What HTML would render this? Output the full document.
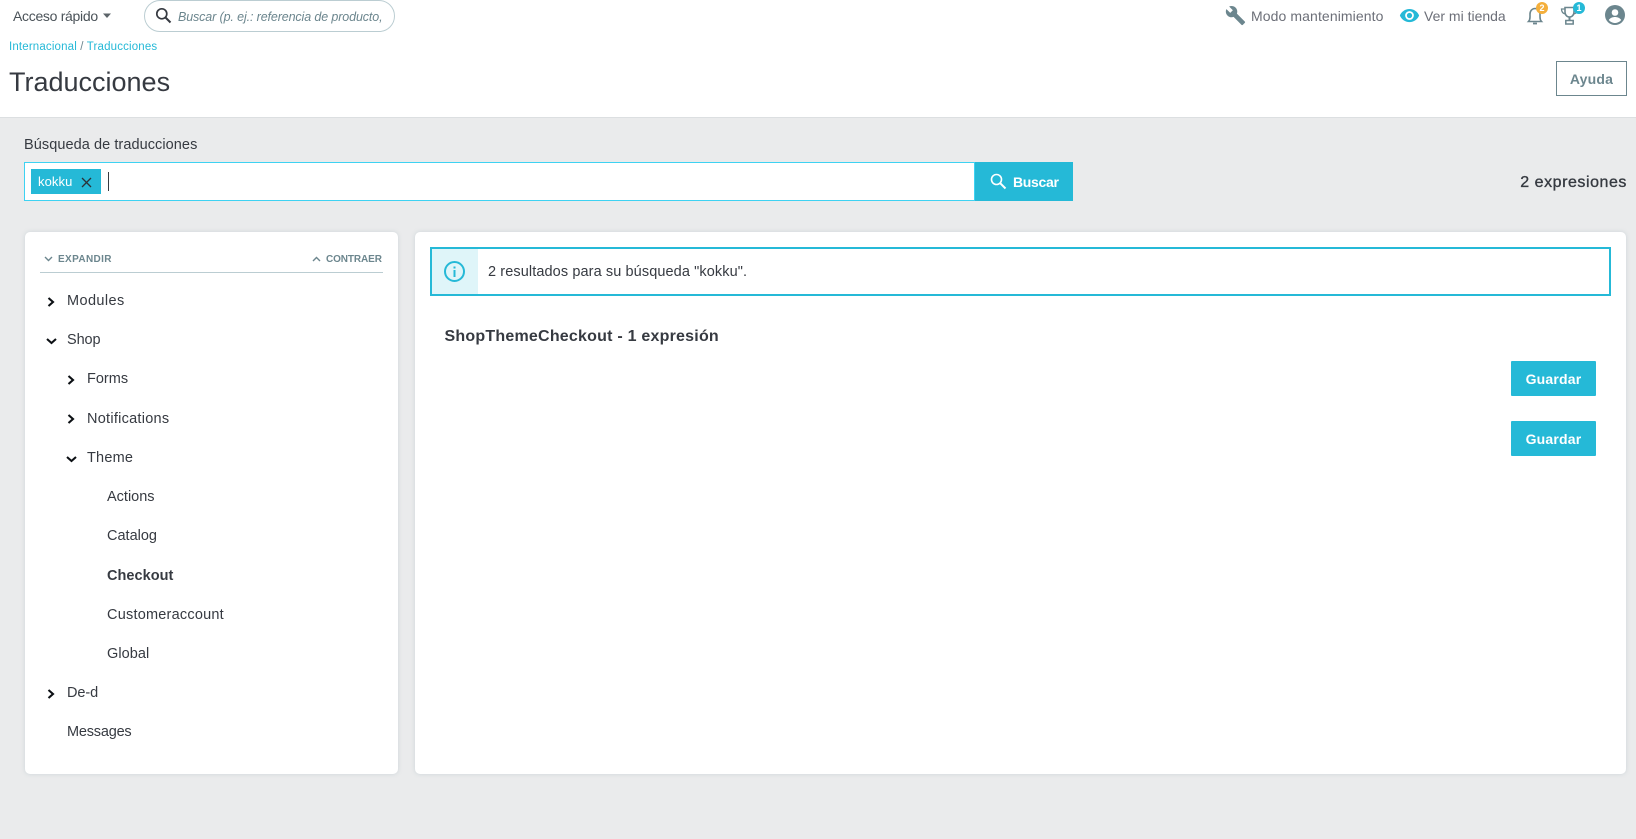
<!DOCTYPE html>
<html lang="es">
<head>
<meta charset="utf-8">
<title>Traducciones</title>
<style>
html,body{margin:0;padding:0}
body{width:1636px;height:839px;position:relative;overflow:hidden;background:#eaebec;font-family:"Liberation Sans",sans-serif;font-size:14.5px;color:#363a41}
.t{position:absolute;white-space:nowrap;line-height:20px;height:20px}
.a{position:absolute}
svg{position:absolute;display:block}
#hdr{position:absolute;left:0;top:0;width:1636px;height:117px;background:#fff;border-bottom:1px solid #dcdfe1}
.card{position:absolute;top:232px;height:542px;background:#fff;border-radius:5px;box-shadow:0 0 4px rgba(150,170,180,.35)}
.btn{position:absolute;background:#25b9d7;color:#fff;font-weight:700;text-align:center;border-radius:1px}
</style>
</head>
<body>
<div id="hdr"></div>

<div class="t" style="left:13px;top:6px;font-size:14px;letter-spacing:-.3px;color:#4a5258">Acceso rápido</div>
<svg style="left:102px;top:13px" width="10" height="6"><path d="M1 .5h8L5 5z" fill="#5c6469"/></svg>

<div class="a" style="left:144px;top:0;width:249px;height:30px;border:1px solid #bbcdd2;border-radius:16px;overflow:hidden">
  <div class="t" style="left:33px;top:6px;width:208px;overflow:hidden;font-style:italic;font-size:12.5px;letter-spacing:-.12px;color:#6c868e">Buscar (p. ej.: referencia de producto, nombre de cliente...)</div>
</div>
<svg style="left:155px;top:7px" width="17" height="17" viewBox="0 0 17 17"><circle cx="6.800" cy="6.800" r="5" fill="none" stroke="#363a41" stroke-width="1.700"/><path d="M10.500 10.500l5 5" stroke="#363a41" stroke-width="2"/></svg>

<div class="t" style="left:9px;top:37px;font-size:11.5px;letter-spacing:.16px;color:#25b9d7">Internacional <span style="color:#6c868e">/</span> Traducciones</div>
<div class="t" style="left:9px;top:66px;height:32px;line-height:32px;font-size:27px;color:#363a41">Traducciones</div>

<!-- right header -->
<svg style="left:1225px;top:5px" width="21" height="21" viewBox="0 0 24 24"><path d="M22.700 19l-9.100-9.100c.9-2.300.4-5-1.500-6.900-2-2-5-2.400-7.400-1.300L9 6 6 9 1.600 4.700C.4 7.100.9 10.100 2.900 12.100c1.900 1.900 4.600 2.400 6.900 1.500l9.100 9.100c.4.400 1 .4 1.400 0l2.300-2.300c.5-.4.5-1.100.1-1.400z" fill="#6c868e"/></svg>
<div class="t" style="left:1251px;top:6px;font-size:14px;letter-spacing:.1px;color:#6c6f78">Modo mantenimiento</div>
<svg style="left:1399px;top:5px" width="21" height="21" viewBox="0 0 24 24"><path d="M12 4.500C7 4.500 2.700 7.600 1 12c1.700 4.400 6 7.500 11 7.500s9.300-3.100 11-7.500c-1.700-4.400-6-7.500-11-7.500zM12 17a5 5 0 1 1 0-10 5 5 0 0 1 0 10zm0-8a3 3 0 1 0 0 6 3 3 0 0 0 0-6z" fill="#25b9d7"/></svg>
<div class="t" style="left:1424px;top:6px;font-size:14px;color:#6c6f78">Ver mi tienda</div>

<svg style="left:1525px;top:4px" width="20" height="22" viewBox="0 0 20 22"><path d="M3.500 17.500c1.200-1.300 1.500-2.300 1.500-4.500V10c0-3 2-5.500 5-5.500s5 2.500 5 5.500v3c0 2.200.3 3.200 1.500 4.500z" fill="none" stroke="#6c868e" stroke-width="1.600"/><path d="M8 19.500h4" stroke="#6c868e" stroke-width="1.800"/></svg>
<div class="a" style="left:1536px;top:2px;width:12px;height:12px;border-radius:50%;background:#f4af3c;color:#fff;font-size:9px;font-weight:700;line-height:12px;text-align:center">2</div>

<svg style="left:1560px;top:5px" width="19" height="20" viewBox="0 0 19 20"><path d="M5 2.500h9v4.500c0 3-2 5-4.500 5S5 10 5 7z" fill="none" stroke="#6c868e" stroke-width="1.600"/><path d="M5 4H1.500c0 3 1.300 4.500 4 5M14 4h3.500c0 3-1.300 4.500-4 5" fill="none" stroke="#6c868e" stroke-width="1.300"/><path d="M9.500 12v3" stroke="#6c868e" stroke-width="2"/><rect x="5.800" y="15.500" width="7.400" height="3.500" fill="none" stroke="#6c868e" stroke-width="1.500"/></svg>
<div class="a" style="left:1573px;top:2px;width:12px;height:12px;border-radius:50%;background:#25b9d7;color:#fff;font-size:9px;font-weight:700;line-height:12px;text-align:center">1</div>

<svg style="left:1605px;top:5px" width="20" height="20" viewBox="0 0 20 20"><circle cx="10" cy="10" r="10" fill="#6c868e"/><circle cx="10" cy="7.500" r="3.300" fill="#fff"/><path d="M3.800 15c1.300-2 3.700-3 6.200-3s4.900 1 6.200 3c-1.500 1.800-3.700 3-6.200 3s-4.700-1.200-6.200-3z" fill="#fff"/></svg>

<div class="a" style="left:1556px;top:61px;width:69px;height:33px;border:1px solid #6c868e;background:#fff;color:#6c868e;font-weight:700;font-size:14px;line-height:35px;text-align:center;letter-spacing:.2px">Ayuda</div>

<!-- search -->
<div class="t" style="left:24px;top:135px;letter-spacing:.07px;color:#363a41">Búsqueda de traducciones</div>
<div class="a" style="left:24px;top:162px;width:949px;height:37px;border:1px solid #3ed2f2;background:#fff"></div>
<div class="a" style="left:31px;top:169px;width:70px;height:25px;background:#25b9d7"></div>
<div class="t" style="left:38px;top:172px;font-size:13px;letter-spacing:.1px;color:#fff">kokku</div>
<svg style="left:81px;top:177px" width="11" height="11" viewBox="0 0 11 11"><path d="M1 1l9 9M10 1l-9 9" stroke="#2b3238" stroke-width="1.300"/></svg>
<div class="a" style="left:108px;top:172px;width:1px;height:19px;background:#363a41"></div>
<div class="btn" style="left:975px;top:162px;width:98px;height:39px;border-radius:0"></div>
<svg style="left:990px;top:173px" width="17" height="17" viewBox="0 0 17 17"><circle cx="6.500" cy="6.500" r="5" fill="none" stroke="#fff" stroke-width="1.600"/><path d="M10.200 10.200l5.300 5.300" stroke="#fff" stroke-width="2"/></svg>
<div class="t" style="left:1013px;top:172px;font-weight:700;font-size:14px;letter-spacing:-.3px;color:#fff">Buscar</div>
<div class="t" style="right:9px;top:173px;font-size:16px;letter-spacing:.55px;color:#363a41;-webkit-text-stroke:.35px #363a41">2 expresiones</div>

<!-- left card -->
<div class="card" style="left:25px;width:373px"></div>
<svg style="left:44px;top:256px" width="9" height="6" viewBox="0 0 9 6"><path d="M1 1l3.500 3.500L8 1" fill="none" stroke="#6c868e" stroke-width="1.400"/></svg>
<div class="t" style="left:58px;top:250px;font-size:10px;font-weight:700;letter-spacing:.37px;color:#6c868e">EXPANDIR</div>
<svg style="left:312px;top:256px" width="9" height="6" viewBox="0 0 9 6"><path d="M1 5l3.500-3.500L8 5" fill="none" stroke="#6c868e" stroke-width="1.400"/></svg>
<div class="t" style="left:326px;top:250px;font-size:10px;font-weight:700;letter-spacing:-.1px;color:#6c868e">CONTRAER</div>
<div class="a" style="left:40px;top:272px;width:343px;height:1px;background:#bbcdd2"></div>

<svg style="left:47px;top:297px" width="9" height="10" viewBox="0 0 9 10"><path d="M1.500 1l4.500 4-4.500 4" fill="none" stroke="#0c1014" stroke-width="2.100"/></svg>
<div class="t" style="left:67px;top:291px;letter-spacing:.4px">Modules</div>
<svg style="left:46px;top:338px" width="11" height="7" viewBox="0 0 11 7"><path d="M1 1l4.500 4L10 1" fill="none" stroke="#0c1014" stroke-width="2.100"/></svg>
<div class="t" style="left:67px;top:330px;letter-spacing:-.1px">Shop</div>
<svg style="left:67px;top:375px" width="9" height="10" viewBox="0 0 9 10"><path d="M1.500 1l4.500 4-4.500 4" fill="none" stroke="#0c1014" stroke-width="2.100"/></svg>
<div class="t" style="left:87px;top:369px">Forms</div>
<svg style="left:67px;top:414px" width="9" height="10" viewBox="0 0 9 10"><path d="M1.500 1l4.500 4-4.500 4" fill="none" stroke="#0c1014" stroke-width="2.100"/></svg>
<div class="t" style="left:87px;top:409px;letter-spacing:.26px">Notifications</div>
<svg style="left:66px;top:456px" width="11" height="7" viewBox="0 0 11 7"><path d="M1 1l4.500 4L10 1" fill="none" stroke="#0c1014" stroke-width="2.100"/></svg>
<div class="t" style="left:87px;top:448px;letter-spacing:.2px">Theme</div>
<div class="t" style="left:107px;top:487px">Actions</div>
<div class="t" style="left:107px;top:526px">Catalog</div>
<div class="t" style="left:107px;top:566px;font-weight:700;letter-spacing:.04px">Checkout</div>
<div class="t" style="left:107px;top:605px;letter-spacing:.22px">Customeraccount</div>
<div class="t" style="left:107px;top:644px;letter-spacing:.07px">Global</div>
<svg style="left:47px;top:689px" width="9" height="10" viewBox="0 0 9 10"><path d="M1.500 1l4.500 4-4.500 4" fill="none" stroke="#0c1014" stroke-width="2.100"/></svg>
<div class="t" style="left:67px;top:683px;letter-spacing:-.1px">De-d</div>
<div class="t" style="left:67px;top:722px;letter-spacing:-.2px">Messages</div>

<!-- right card -->
<div class="card" style="left:415px;width:1211px"></div>
<div class="a" style="left:430px;top:247px;width:1177px;height:45px;border:2px solid #25b9d7;background:#fff"></div>
<div class="a" style="left:432px;top:249px;width:46px;height:45px;background:#dff5f9"></div>
<svg style="left:443px;top:260px" width="23" height="23" viewBox="0 0 23 23"><circle cx="11.500" cy="11.500" r="9.500" fill="none" stroke="#25b9d7" stroke-width="2"/><rect x="10.500" y="10" width="2" height="7" fill="#25b9d7"/><rect x="10.500" y="6.500" width="2" height="2" fill="#25b9d7"/></svg>
<div class="t" style="left:488px;top:262px;letter-spacing:.1px;color:#363a41">2 resultados para su búsqueda "kokku".</div>
<div class="t" style="left:444.500px;top:327px;font-size:16px;font-weight:700;letter-spacing:.22px;color:#363a41">ShopThemeCheckout - 1 expresión</div>
<div class="btn" style="left:1511px;top:361px;width:85px;height:35px;line-height:37px;font-size:14px;letter-spacing:.2px">Guardar</div>
<div class="btn" style="left:1511px;top:421px;width:85px;height:35px;line-height:37px;font-size:14px;letter-spacing:.2px">Guardar</div>
</body>
</html>
